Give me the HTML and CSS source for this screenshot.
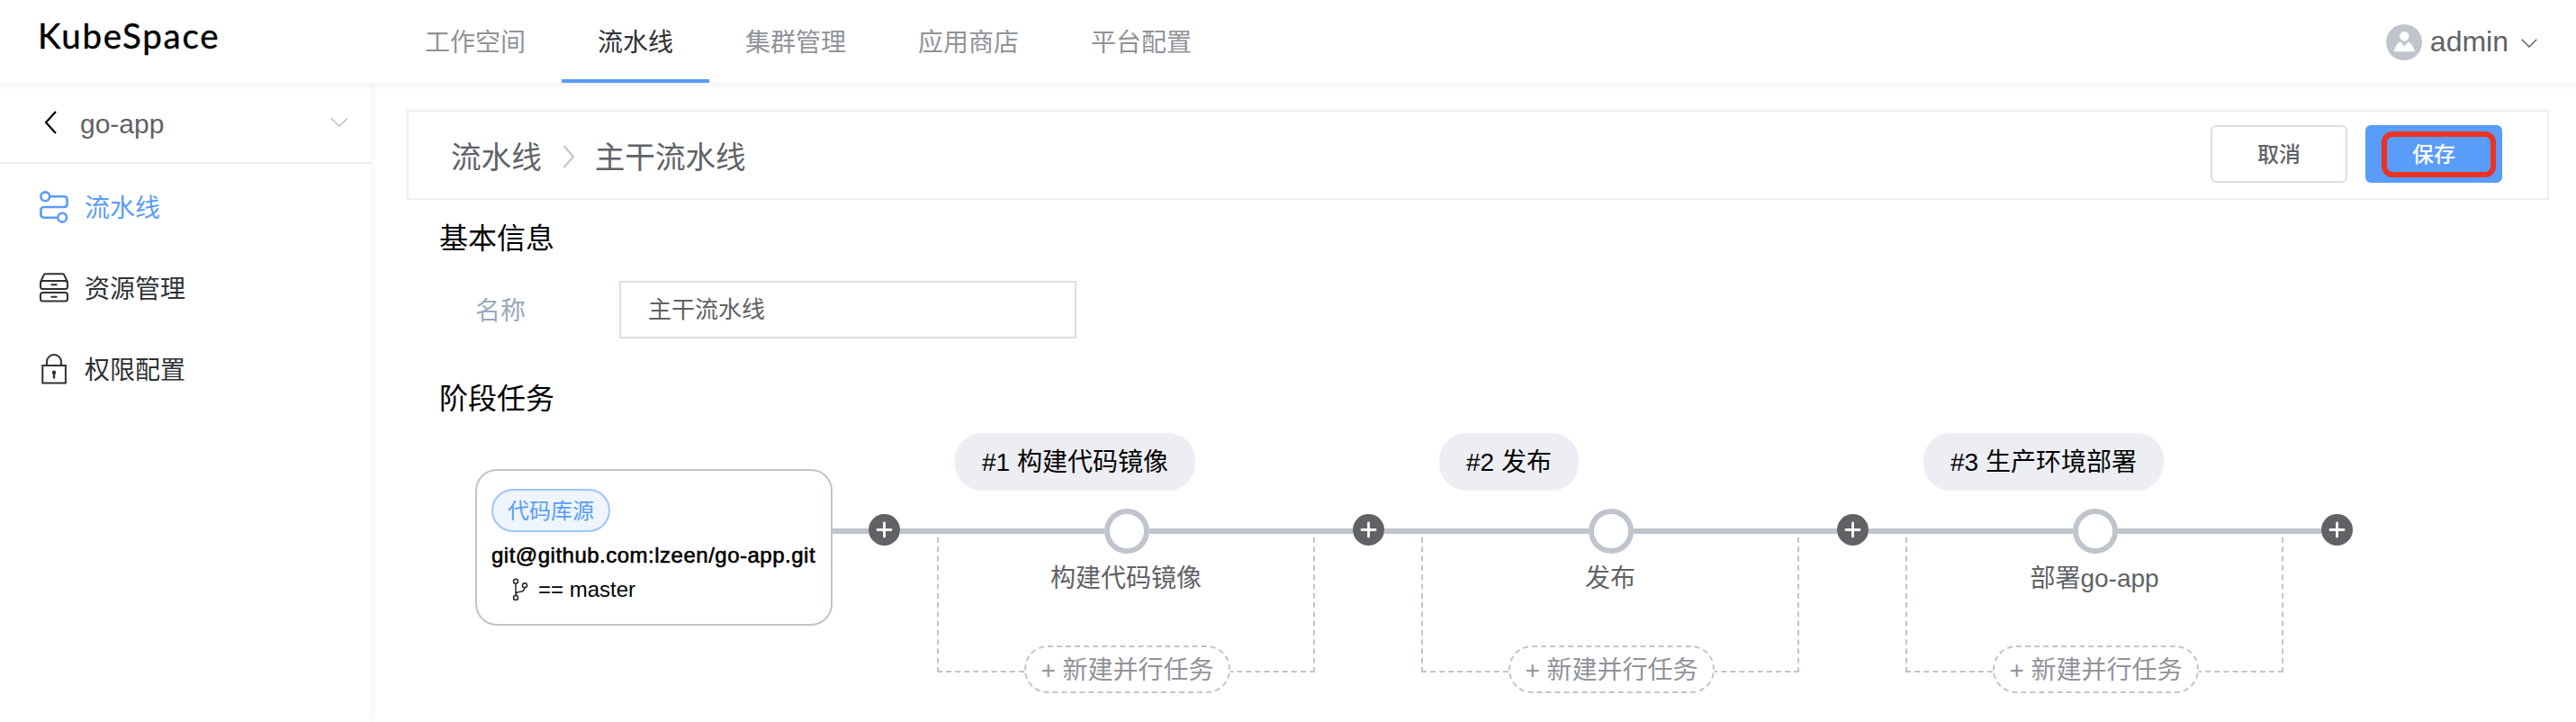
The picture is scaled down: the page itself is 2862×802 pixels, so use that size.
FILE: index.html
```html
<!DOCTYPE html>
<html lang="zh-CN">
<head>
<meta charset="utf-8">
<title>KubeSpace</title>
<link rel="stylesheet" href="styles.css">
</head>
<body>
<header class="topbar">
  <div class="logo">KubeSpace</div>
  <nav class="tabs">
    <a class="tab">工作空间</a>
    <a class="tab active">流水线</a>
    <a class="tab">集群管理</a>
    <a class="tab">应用商店</a>
    <a class="tab">平台配置</a>
  </nav>
  <div class="user">
    <svg class="avatar" viewBox="0 0 40 40"><circle cx="20" cy="20" r="20" fill="#c0c4cc"/><circle cx="20.3" cy="13.2" r="5.2" fill="#fff"/><path d="M8.5 30.3c1-5 3.600-8.600 7.300-11.100l4.500 5.200 4.500-5.200c3.700 2.500 6 6.100 7 11.100z" fill="#fff"/></svg>
    <span class="user-name">admin</span>
    <svg class="user-arrow" viewBox="0 0 18 10"><path d="M.7.7 9 9 17.300.7" fill="none" stroke="#606266" stroke-width="1.500"/></svg>
  </div>
</header>
<div class="shell">
  <aside class="sidebar">
    <div class="project">
      <svg class="back" viewBox="0 0 14 26"><path d="M13 1 2 13l11 12" fill="none" stroke="#000" stroke-width="2.200"/></svg>
      <span class="project-name">go-app</span>
      <svg class="project-arrow" viewBox="0 0 22 12"><path d="M1 1l10 9.500L21 1" fill="none" stroke="#c0c4cc" stroke-width="1.800"/></svg>
    </div>
    <nav class="menu">
      <a class="item active">
        <svg class="item-icon" viewBox="0 0 32 36" fill="none" stroke="currentColor" stroke-width="2.600"><circle cx="6.300" cy="6.300" r="4.900"/><circle cx="25.200" cy="29.700" r="4.900"/><path d="M11.500 6.300H27q3.600 0 3.600 3.600v4.500q0 3.600-3.600 3.600H5q-3.600 0-3.600 3.600v4.500q0 3.600 3.600 3.600h15"/></svg>
        <span>流水线</span>
      </a>
      <a class="item">
        <svg class="item-icon" viewBox="0 0 32 36" fill="none" stroke="currentColor" stroke-width="2"><path d="M1 11.500 4.800 3.200Q5.300 2.300 6.300 2.300h19.400q1 0 1.500.9L31 11.500"/><rect x="1" y="10" width="30" height="9" rx="2.500"/><rect x="1" y="23" width="30" height="9.500" rx="2.500"/><path d="M12.500 14.300h7M12.500 27.700h7"/></svg>
        <span>资源管理</span>
      </a>
      <a class="item">
        <svg class="item-icon" viewBox="0 0 32 36" fill="none" stroke="currentColor" stroke-width="2"><rect x="3.300" y="14" width="25.600" height="19.500"/><path d="M8 14v-4a8 8 0 0 1 16 0v4"/><path d="M16 21v7.500" stroke-width="2.400"/><circle cx="16" cy="21.700" r="2.200" fill="currentColor" stroke="none"/></svg>
        <span>权限配置</span>
      </a>
    </nav>
  </aside>
  <main class="main">
    <div class="crumbs">
      <span>流水线</span>
      <svg class="crumb-sep" viewBox="0 0 14 26"><path d="M1.500 1 12 13 1.500 25" fill="none" stroke="#c0c4cc" stroke-width="2"/></svg>
      <span>主干流水线</span>
      <div class="actions">
        <button class="btn">取消</button>
        <button class="btn primary">保存<i class="mark"></i></button>
      </div>
    </div>
    <section class="content">
      <h2 class="title">基本信息</h2>
      <div class="field">
        <label class="label">名称</label>
        <div class="input">主干流水线</div>
      </div>
      <h2 class="title second">阶段任务</h2>
      <div class="pipeline">
        <div class="source">
          <span class="tag">代码库源</span>
          <div class="repo">git@github.com:lzeen/go-app.git</div>
          <div class="branch">
            <svg class="branch-icon" viewBox="0 0 18 26" fill="none" stroke="#222" stroke-width="1.500"><circle cx="4" cy="3.800" r="2.500"/><circle cx="4" cy="22" r="2.500"/><circle cx="14" cy="8.200" r="2.500"/><path d="M4 6.300v13.200M13.800 10.700c-.3 3-1.600 4.300-4.300 4.600-3 .3-5.300.7-5.500 3.200"/></svg>
            <span>== master</span>
          </div>
        </div>
        <div class="wire first"></div>
        <div class="stage">
          <svg class="plus" viewBox="0 0 35 35"><circle cx="17.500" cy="17.500" r="17.500" fill="#606266"/><path d="M17.500 10v15M10 17.500h15" stroke="#fff" stroke-width="2.800" stroke-linecap="round"/></svg>
          <div class="stage-body">
            <div class="stage-name">#1 构建代码镜像</div>
            <div class="track"><i class="wire"></i><i class="node"></i><i class="wire"></i></div>
            <div class="jobs"><div class="job">构建代码镜像</div><div class="add">+ 新建并行任务</div></div>
          </div>
        </div>
        <div class="stage">
          <svg class="plus" viewBox="0 0 35 35"><circle cx="17.500" cy="17.500" r="17.500" fill="#606266"/><path d="M17.500 10v15M10 17.500h15" stroke="#fff" stroke-width="2.800" stroke-linecap="round"/></svg>
          <div class="stage-body">
            <div class="stage-name">#2 发布</div>
            <div class="track"><i class="wire"></i><i class="node"></i><i class="wire"></i></div>
            <div class="jobs"><div class="job">发布</div><div class="add">+ 新建并行任务</div></div>
          </div>
        </div>
        <div class="stage">
          <svg class="plus" viewBox="0 0 35 35"><circle cx="17.500" cy="17.500" r="17.500" fill="#606266"/><path d="M17.500 10v15M10 17.500h15" stroke="#fff" stroke-width="2.800" stroke-linecap="round"/></svg>
          <div class="stage-body">
            <div class="stage-name">#3 生产环境部署</div>
            <div class="track"><i class="wire"></i><i class="node"></i><i class="wire"></i></div>
            <div class="jobs"><div class="job">部署go-app</div><div class="add">+ 新建并行任务</div></div>
          </div>
        </div>
        <svg class="plus" viewBox="0 0 35 35"><circle cx="17.500" cy="17.500" r="17.500" fill="#606266"/><path d="M17.500 10v15M10 17.500h15" stroke="#fff" stroke-width="2.800" stroke-linecap="round"/></svg>
      </div>
    </section>
  </main>
</div>
</body>
</html>
```

FILE: styles.css
```css
* { box-sizing: border-box; }
body {
  margin: 0;
  height: 802px;
  overflow: hidden;
  display: flex;
  flex-direction: column;
  background: #fff;
  color: #000;
  font-family: "Liberation Sans", "Noto Sans CJK SC", sans-serif;
  font-size: 28px;
}
svg { display: block; flex: none; }

.topbar {
  position: relative;
  z-index: 1;
  flex: none;
  display: flex;
  height: 92px;
  background: #fff;
  box-shadow: 0 2px 8px rgba(0, 41, 31, .08);
}
.logo {
  width: 432px;
  padding-left: 42px;
  font: 38.500px/79px Lato, sans-serif;
  letter-spacing: 1.700px;
  -webkit-text-stroke: .4px #000;
}
.tabs { display: flex; }
.tab {
  height: 92px;
  padding: 0 40px;
  line-height: 96px;
  color: #909399;
}
.tab.active { color: #303133; border-bottom: 4px solid #599cf9; }
.user {
  display: flex;
  align-items: center;
  margin-left: auto;
  padding: 2px 43px 0 0;
  color: #606266;
}
.avatar { width: 40px; height: 40px; }
.user-name { margin: 0 14px 0 9px; font-size: 32px; line-height: 36px; padding-bottom: 2px; }
.user-arrow { width: 18px; height: 10px; margin-top: 2px; }

.shell { flex: 1; display: flex; }
.sidebar { width: 412px; flex: none; box-shadow: 2px 0 6px rgba(0, 41, 31, .05); }
.project {
  display: flex;
  align-items: center;
  height: 90px;
  padding: 0 25px 0 49px;
  border-bottom: 2px solid #edeef3;
}
.back { width: 14px; height: 26px; }
.project-name { margin-left: 26px; padding-top: 4px; font-size: 30px; color: #606266; }
.project-arrow { width: 20px; height: 12px; margin-left: auto; }
.menu { padding-top: 3px; }
.item {
  display: flex;
  align-items: center;
  gap: 18px;
  height: 90px;
  padding-left: 44px;
  color: #303133;
}
.item span { padding-bottom: 3px; }
.item.active { color: #599cf9; }
.item-icon { width: 32px; height: 36px; }

.main { flex: 1; padding: 30px 30px 0 40px; }
.crumbs {
  display: flex;
  align-items: center;
  height: 100px;
  padding: 0 50px 0 47px;
  border: 2px solid #edeef3;
  font-size: 33.600px;
  color: #606266;
}
.crumb-sep { width: 14px; height: 26px; margin: 3px 22px 0 23px; }
.actions { display: flex; gap: 20px; margin: -2px 0 0 auto; }
.btn {
  position: relative;
  width: 152px;
  height: 64px;
  padding: 0 0 3px;
  border: 2px solid #dcdfe6;
  border-radius: 6px;
  background: #fff;
  color: #606266;
  font: 500 24px "Liberation Sans", "Noto Sans CJK SC", sans-serif;
}
.btn.primary { background: #599cf9; border-color: #599cf9; color: #fff; }
.mark {
  position: absolute;
  left: 16px;
  top: 5px;
  width: 127px;
  height: 51px;
  border: 6px solid #ea3323;
  border-radius: 12px;
}

.content { padding-left: 36px; }
.title { margin: 19px 0 0; font-size: 32px; font-weight: 400; line-height: 48px; }
.field { display: flex; align-items: center; margin-top: 23px; }
.label { width: 200px; padding: 0 0 3px 40px; color: #99a9bf; }
.input {
  width: 508px;
  height: 64px;
  padding-left: 30px;
  border: 2px solid #dcdfe6;
  font-size: 26px;
  line-height: 60px;
  color: #606266;
}
.title.second { margin-top: 43px; }

.pipeline { display: flex; align-items: flex-start; margin: 14px 0 0 40px; }
.source {
  width: 397px;
  height: 174px;
  margin-top: 40px;
  padding: 20px 0 0 16px;
  border: 2px solid #c0c4cc;
  border-radius: 24px;
  font-size: 24px;
}
.tag {
  display: block;
  width: 132px;
  height: 48px;
  border: 2px solid #9cc6fb;
  border-radius: 24px;
  background: #eef5fe;
  color: #599cf9;
  line-height: 45px;
  text-align: center;
}
.repo {
  margin-top: 10px;
  line-height: 32px;
  letter-spacing: .5px;
  -webkit-text-stroke: .6px #000;
  white-space: nowrap;
}
.branch { display: flex; align-items: center; margin: 8px 0 0 23px; line-height: 28px; }
.branch-icon { width: 18px; height: 26px; margin-right: 11px; }
.wire { height: 6px; background: #c0c4cc; }
.wire.first { width: 40px; margin-top: 106px; }
.stage { display: flex; }
.plus { width: 35px; height: 35px; margin-top: 90px; }
.stage-body { width: 503px; }
.stage-name {
  width: fit-content;
  height: 64px;
  margin-left: 61px;
  padding: 0 30px;
  border-radius: 30px;
  background: #edeef3;
  line-height: 66px;
}
.track { display: flex; align-items: center; height: 50px; margin-top: 20px; }
.track .wire { flex: 1; }
.node { width: 50px; height: 50px; border: 6px solid #c0c4cc; border-radius: 50%; }
.jobs {
  display: flex;
  flex-direction: column;
  align-items: center;
  width: 420px;
  height: 150px;
  margin: -18px 0 0 41px;
  padding-top: 25px;
  border: 2px dashed #c0c4cc;
  border-top: 0;
}
.job { line-height: 42px; color: #606266; }
.add {
  flex: none;
  height: 53px;
  margin: 53px 0 0 3px;
  padding: 0 16px;
  border: 2px dashed #c0c4cc;
  border-radius: 26px;
  background: #fff;
  color: #909399;
  line-height: 52px;
  white-space: nowrap;
}
```
